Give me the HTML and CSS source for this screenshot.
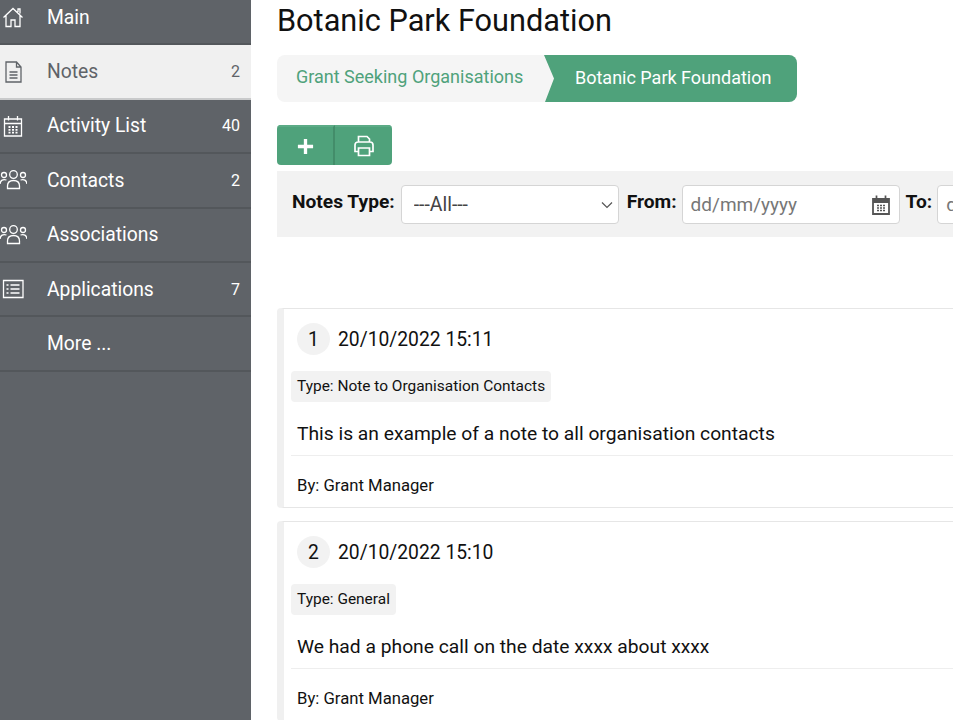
FILE: index.html
```html
<!DOCTYPE html>
<html lang="en">
  <head>
    <meta charset="UTF-8" />
    <meta name="viewport" content="width=device-width, initial-scale=1.0" />
    <title>Botanic Park Foundation - Notes</title>
    <link rel="stylesheet" href="styles.css">
  </head>
  <body>
    <aside class="sidebar">
      <ul class="nav">
        <li class="nav-item">
          <svg class="nav-icon" viewBox="0 0 24 24"><path d="M2.500 12.500 12 3.500 21.500 12.500M5 10.500v11h5V15h4v6.500h5v-11M17 7V4h2v4.500"/></svg>
          <span class="nav-label">Main</span>
        </li>
        <li class="nav-item active">
          <svg class="nav-icon" viewBox="0 0 24 24"><path d="M5 2h10.500l4.500 5v15H5zM15.500 2v5H20M8.500 12h8M8.500 15h8M8.500 18h8"/></svg>
          <span class="nav-label">Notes</span>
          <span class="nav-count">2</span>
        </li>
        <li class="nav-item">
          <svg class="nav-icon" viewBox="0 0 24 24"><path d="M3.500 5h17v17h-17zM3.500 9.500h17M7.500 2v4.500M16.500 2v4.500"/><path class="nav-dots" d="M7.500 13h2M11 13h2M14.500 13h2M7.500 15.800h2M11 15.800h2M14.500 15.800h2M7.500 18.600h2M11 18.600h2M14.500 18.600h2"/></svg>
          <span class="nav-label">Activity List</span>
          <span class="nav-count">40</span>
        </li>
        <li class="nav-item">
          <svg class="nav-icon wide" viewBox="0 0 27 24"><circle cx="13.500" cy="6.500" r="3.800"/><circle cx="4" cy="7" r="2.500"/><circle cx="23" cy="7" r="2.500"/><path d="M7.500 20.500v-2.500c0-4 3-5.500 6-5.500s6 1.500 6 5.500v2.500zM0 16c.5-4 3-5 6.500-4M27 16c-.5-4-3-5-6.500-4"/></svg>
          <span class="nav-label">Contacts</span>
          <span class="nav-count">2</span>
        </li>
        <li class="nav-item">
          <svg class="nav-icon wide" viewBox="0 0 27 24"><circle cx="13.500" cy="6.500" r="3.800"/><circle cx="4" cy="7" r="2.500"/><circle cx="23" cy="7" r="2.500"/><path d="M7.500 20.500v-2.500c0-4 3-5.500 6-5.500s6 1.500 6 5.500v2.500zM0 16c.5-4 3-5 6.500-4M27 16c-.5-4-3-5-6.500-4"/></svg>
          <span class="nav-label">Associations</span>
        </li>
        <li class="nav-item">
          <svg class="nav-icon" viewBox="0 0 24 24"><path d="M2.500 3.500h19.500v17H2.500zM9.500 8h9M9.500 12h9M9.500 16h9M5.500 8h2M5.500 12h2M5.500 16h2"/></svg>
          <span class="nav-label">Applications</span>
          <span class="nav-count">7</span>
        </li>
        <li class="nav-item">
          <span class="nav-label no-icon">More ...</span>
        </li>
      </ul>
    </aside>

    <main class="content">
      <h1 class="page-title">Botanic Park Foundation</h1>

      <nav class="crumbs">
        <a class="crumb">Grant Seeking Organisations</a>
        <a class="crumb current">Botanic Park Foundation</a>
      </nav>

      <div class="btn-group">
        <button class="btn add" type="button">
          <svg viewBox="0 0 20 20"><path d="M10 2v16M2 10h16"/></svg>
        </button>
        <button class="btn print" type="button">
          <svg viewBox="0 0 24 24"><path d="M6.500 8V2.500h8.500L17.500 5v3M6.500 17.500H3v-6.500a3 3 0 0 1 3-3h12a3 3 0 0 1 3 3v6.500h-3.500M6.500 14h11v7.500h-11z"/></svg>
        </button>
      </div>

      <form class="filters">
        <label class="filter-label" for="notesType">Notes Type:</label>
        <div class="select-box">
          <select id="notesType">
            <option>---All---</option>
          </select>
          <svg class="chevron" viewBox="0 0 12 8"><path d="M1 1.500 6 6.500 11 1.500"/></svg>
        </div>
        <label class="filter-label from" for="from">From:</label>
        <div class="date-box">
          <input type="text" id="from" placeholder="dd/mm/yyyy" />
          <svg class="cal" viewBox="0 0 18 20"><path d="M1 4h16v15H1z"/><path class="cal-head" d="M1 6h16"/><path class="cal-bits" d="M4.500 .5v3.500M13.500 .5v3.500M5 10.500h2M8 10.500h2M11 10.500h2M5 13h2M8 13h2M11 13h2M5 15.500h2M8 15.500h2M11 15.500h2"/></svg>
        </div>
        <label class="filter-label to" for="to">To:</label>
        <div class="date-box">
          <input type="text" id="to" placeholder="dd/mm/yyyy" />
        </div>
      </form>

      <section class="notes">
        <article class="note">
          <div class="note-head">
            <span class="note-num">1</span>
            <span class="note-date">20/10/2022 15:11</span>
          </div>
          <span class="note-type">Type: Note to Organisation Contacts</span>
          <p class="note-body">This is an example of a note to all organisation contacts</p>
          <p class="note-by">By: Grant Manager</p>
        </article>
        <article class="note">
          <div class="note-head">
            <span class="note-num">2</span>
            <span class="note-date">20/10/2022 15:10</span>
          </div>
          <span class="note-type">Type: General</span>
          <p class="note-body">We had a phone call on the date xxxx about xxxx</p>
          <p class="note-by">By: Grant Manager</p>
        </article>
      </section>
    </main>
  </body>
</html>
```

FILE: styles.css
```css
html,
body {
  height: 100%;
  margin: 0;
  overflow: hidden;
}
body {
  display: flex;
  font-family: Roboto, "Liberation Sans", sans-serif;
  color: #111;
  background: #fff;
}

/* sidebar */
.sidebar {
  width: 251px;
  flex: none;
  background: #5f6368;
  overflow: hidden;
}
.nav {
  list-style: none;
  margin: -9px 0 0;
  padding: 0;
}
.nav-item {
  display: flex;
  align-items: center;
  height: 54.4px;
  box-sizing: border-box;
  padding-right: 11px;
  border-bottom: 2px solid #53575b;
  color: #fff;
  font-size: 19.300px;
}
.nav-item.active {
  background: #f0f0f0;
  color: #5f6368;
  border-bottom-color: #c9cacb;
}
.nav-icon {
  width: 24px;
  height: 24px;
  margin-left: 1px;
  margin-right: 22px;
  flex: none;
  fill: none;
  stroke: currentColor;
  stroke-width: 1.300;
}
.nav-icon.wide {
  width: 27px;
  margin-left: 0;
  margin-right: 20px;
}
.nav-dots {
  stroke-width: 1.800;
}
.nav-label {
  flex: 1;
}
.nav-label.no-icon {
  padding-left: 47px;
}
.nav-count {
  font-size: 16px;
}

/* main */
.content {
  flex: 1;
  min-width: 0;
  padding-left: 26px;
}
.page-title {
  margin: 0;
  padding-top: 2px;
  height: 55px;
  box-sizing: border-box;
  font-size: 30.700px;
  line-height: 37px;
  font-weight: 400;
  color: #111;
  white-space: nowrap;
}

.crumbs {
  display: flex;
  width: 520px;
  height: 47px;
  border-radius: 8px;
  background: #f5f5f5;
  overflow: hidden;
  font-size: 18px;
}
.crumb {
  display: flex;
  align-items: center;
  color: #4fa27b;
  padding-left: 19px;
  padding-bottom: 5px;
  width: 267px;
  flex: none;
  box-sizing: border-box;
}
.crumb.current {
  flex: 1;
  width: auto;
  padding-left: 31px;
  padding-bottom: 3px;
  color: #fff;
  background: #4fa27b;
  clip-path: polygon(0 0, 100% 0, 100% 100%, 1px 100%, 10px 50%);
}

.btn-group {
  display: flex;
  width: 115px;
  height: 40px;
  margin-top: 23px;
  border-radius: 4px;
  overflow: hidden;
}
.btn {
  display: flex;
  align-items: center;
  justify-content: center;
  flex: 1;
  padding: 0;
  border: none;
  border-top: 2px solid #5cab86;
  background: #4fa27b;
  color: #fff;
}
.btn.add {
  flex: 0 0 58px;
  border-right: 2px solid #438d6a;
}
.btn.add svg {
  width: 19px;
  height: 19px;
  fill: none;
  stroke: #fff;
  stroke-width: 3.500;
}
.btn.print svg {
  width: 24px;
  height: 24px;
  fill: none;
  stroke: #fff;
  stroke-width: 1.700;
}

.filters {
  display: flex;
  align-items: center;
  gap: 6px;
  height: 66px;
  margin-top: 6px;
  padding-left: 15px;
  background: #f2f2f2;
  white-space: nowrap;
}
.filter-label {
  font-size: 19.200px;
  font-weight: 700;
  color: #111;
  margin-top: -5px;
}
.filter-label.from {
  margin-left: 2px;
  margin-right: -1px;
}
.filter-label.to {
  margin-right: -1px;
}
.select-box,
.date-box {
  position: relative;
  flex: none;
  box-sizing: border-box;
  width: 218px;
  height: 39px;
  background: #fff;
  border: 1px solid #d5d5d5;
  border-radius: 4px;
}
.select-box select {
  width: 100%;
  height: 100%;
  padding: 0 0 0 12px;
  border: none;
  background: transparent;
  appearance: none;
  font: 19.400px Roboto, sans-serif;
  color: #444;
}
.chevron {
  position: absolute;
  right: 5px;
  top: 15px;
  width: 12px;
  height: 8px;
  fill: none;
  stroke: #555;
  stroke-width: 1.200;
  pointer-events: none;
}
.date-box {
  display: flex;
  align-items: center;
}
.date-box input {
  width: 170px;
  padding: 0 0 0 8px;
  border: none;
  background: transparent;
  font: 19px Roboto, sans-serif;
}
.date-box input::placeholder {
  color: #777;
}
.cal {
  position: absolute;
  right: 9px;
  top: 9px;
  width: 18px;
  height: 20px;
  fill: none;
  stroke: #555;
  stroke-width: 1.800;
}
.cal-head {
  stroke-width: 4;
}
.cal-bits {
  stroke-width: 1.700;
}

/* notes */
.notes {
  margin-top: 71px;
}
.note {
  box-sizing: border-box;
  height: 200px;
  margin-bottom: 13px;
  padding: 14px 0 0 7px;
  border: 1px solid #e6e6e6;
  border-left: 7px solid #f0f0f0;
  border-right: none;
  border-radius: 4px 0 0 4px;
}
.note-head {
  display: flex;
  align-items: center;
  gap: 8px;
  margin-left: 6px;
  height: 32px;
}
.note-num {
  width: 33px;
  height: 32px;
  border-radius: 50%;
  background: #f2f2f2;
  display: flex;
  align-items: center;
  justify-content: center;
  font-size: 19.300px;
}
.note-date {
  font-size: 19.300px;
}
.note-type {
  display: inline-block;
  margin-top: 16px;
  padding: 0 6px;
  height: 31px;
  line-height: 31px;
  background: #f2f2f2;
  border-radius: 4px;
  font-size: 15.450px;
}
.note-body {
  margin: 19px 0 0;
  padding: 0 0 8px 6px;
  border-bottom: 1px solid #eee;
  font-size: 19.250px;
  line-height: 26px;
}
.note-by {
  margin: 20px 0 0 6px;
  font-size: 16.700px;
  line-height: 20px;
}
```
